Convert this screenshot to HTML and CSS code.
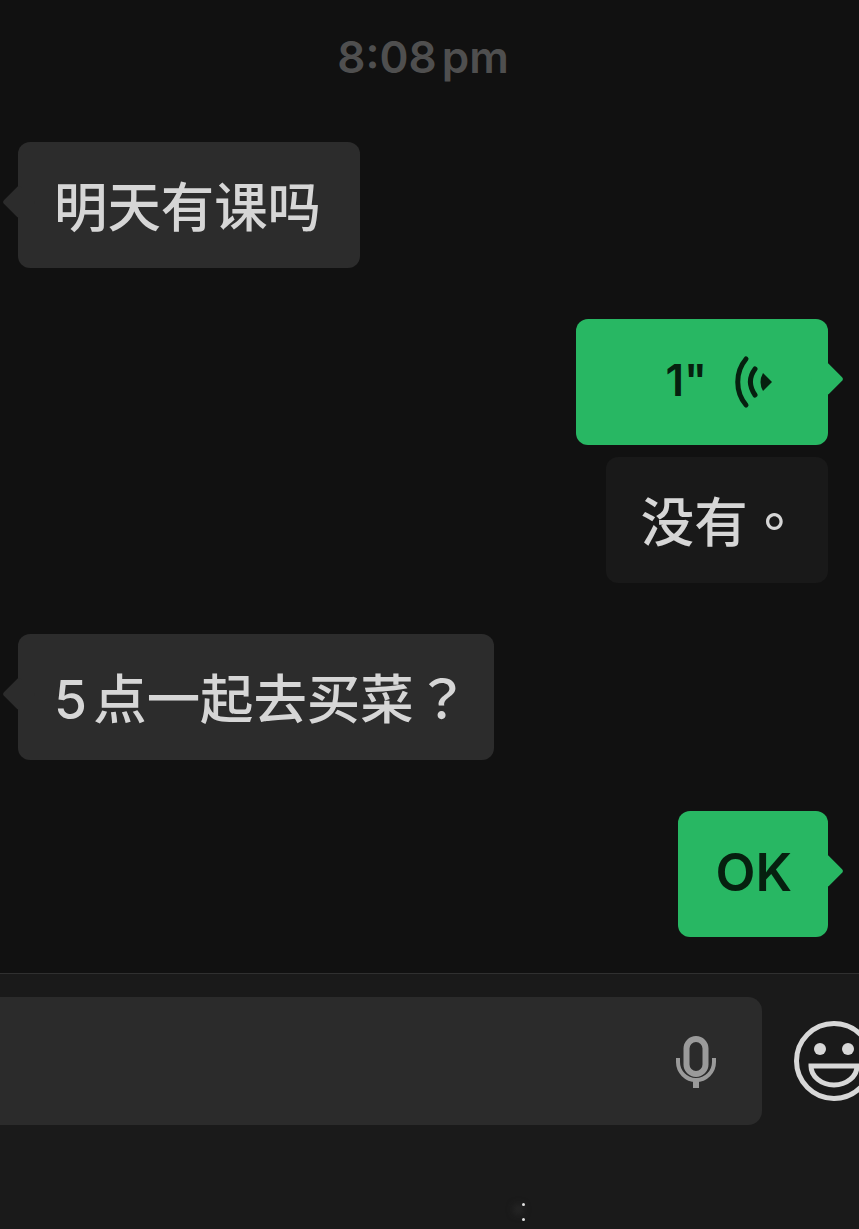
FILE: index.html
```html
<!DOCTYPE html>
<html lang="zh-CN">
<head>
    <meta charset="utf-8">
    <title>Chat</title>
    <link rel="stylesheet" href="styles.css">
</head>
<body>
    <div class="chat">
        <div class="time">8:08 pm</div>
        <div class="bubble left">明天有课吗</div>
        <div class="bubble right green voice">
            <span class="seconds">1"</span>
            <svg class="wave" width="38" height="54" viewBox="0 0 38 54" fill="none" stroke="#06200f" stroke-width="5" stroke-linecap="round">
                <path d="M12 4 C1 17 1 37 12 50"/>
                <path d="M21 14 C15 22 15 31 21 40"/>
                <path d="M29 18 L38 27 L29 36 Q24 27 29 18 Z" fill="#06200f" stroke="none"/>
            </svg>
        </div>
        <div class="bubble right dim tight">没有<span class="tc stop">。</span></div>
        <div class="bubble left spaced">5 点一起去买菜<span class="tc ask">？</span></div>
        <div class="bubble right green ok">OK</div>
    </div>

    <div class="footer">
        <div class="input">
            <svg width="40" height="52" viewBox="0 0 40 52" fill="none" stroke="#9a9a9a" stroke-width="4">
                <rect x="10.5" y="3" width="19" height="35" rx="9.5" stroke-width="6"/>
                <path d="M2 22 V26 A18 18 0 0 0 38 26 V22"/>
                <path d="M20 44 V52" stroke-width="6"/>
            </svg>
        </div>
        <svg class="smile" width="80" height="80" viewBox="0 0 80 80" fill="none" stroke="#d8d8d8" stroke-width="5">
            <circle cx="40" cy="40" r="37.5"/>
            <circle cx="26" cy="28" r="6" fill="#d8d8d8" stroke="none"/>
            <circle cx="54" cy="28" r="6" fill="#d8d8d8" stroke="none"/>
            <path d="M17 45 H63 A23 19 0 0 1 17 45 Z"/>
        </svg>
        <span class="speck one"></span>
        <span class="speck two"></span>
    </div>
</body>
</html>
```

FILE: styles.css
```css
html, body {
    margin: 0;
    padding: 0;
}

body {
    width: 859px;
    height: 1229px;
    overflow: hidden;
    background-color: #111111;
    font-family: Inter, "Noto Sans CJK SC", sans-serif;
}

.chat {
    height: 973px;
    box-sizing: border-box;
    padding: 29px 31px 0 18px;
    display: flex;
    flex-direction: column;
}

.time {
    height: 56px;
    line-height: 56px;
    margin-bottom: 6px;
    text-align: center;
    font-size: 44px;
    font-weight: 600;
    word-spacing: -6px;
    color: #4f4f4f;
}

.bubble {
    position: relative;
    height: 126px;
    box-sizing: border-box;
    margin-top: 51px;
    padding: 0 39px 4px 36px;
    display: flex;
    align-items: center;
    border-radius: 12px;
    font-size: 53.4px;
    font-weight: 500;
    color: #d6d6d6;
}

.bubble.tight {
    margin-top: 12px;
    padding-left: 35px;
    padding-right: 40px;
}

.bubble::after {
    content: "";
    position: absolute;
    top: 48px;
    width: 24px;
    height: 24px;
    border-radius: 3px;
    transform: rotate(45deg);
}

.left {
    align-self: flex-start;
    background-color: #2c2c2c;
}

.left::after {
    left: -11px;
    background-color: #2c2c2c;
}

.right {
    align-self: flex-end;
}

.right::after {
    right: -11px;
    background-color: #28b763;
}

.green {
    background-color: #28b763;
    color: #06200f;
}

.dim {
    background-color: #191919;
}

.dim::after {
    display: none;
}

.tc {
    font-family: "Noto Sans CJK TC", sans-serif;
}

.stop {
    margin-right: -13px;
}

.spaced {
    word-spacing: -8px;
}

.ask {
    margin: 0 -14px 0 2px;
}

.voice {
    width: 252px;
    padding: 0 56px 4px 0;
    justify-content: flex-end;
    gap: 27px;
}

.seconds {
    font-size: 44px;
    font-weight: 600;
}

.wave {
    margin-top: 4px;
}

.ok {
    font-size: 52px;
    font-weight: 600;
    padding: 0 36px 4px 37px;
}

.footer {
    position: relative;
    height: 256px;
    box-sizing: border-box;
    padding-top: 23px;
    display: flex;
    align-items: flex-start;
    gap: 32px;
    border-top: 1px solid #303030;
    background-color: #1a1a1a;
}

.input {
    width: 790px;
    height: 128px;
    margin-left: -28px;
    flex-shrink: 0;
    box-sizing: border-box;
    padding: 39px 46px 0 0;
    display: flex;
    justify-content: flex-end;
    border-radius: 14px;
    background-color: #2b2b2b;
}

.smile {
    flex-shrink: 0;
    margin-top: 24px;
}

.speck {
    position: absolute;
    left: 522px;
    width: 3px;
    height: 3px;
    border-radius: 50%;
    background-color: #e0e0e0;
}

.speck.one {
    top: 229px;
    box-shadow: -5px 5px 8px 2px #3a3a3a;
}

.speck.two {
    top: 244px;
}
```
